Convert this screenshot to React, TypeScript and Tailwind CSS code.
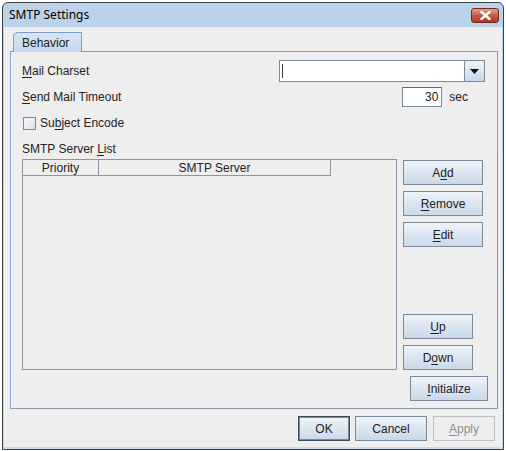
import React from 'react'

const font = { fontFamily: '"Liberation Sans", Arial, sans-serif' }

function U({ children }: { children: React.ReactNode }) {
  return <span className="underline underline-offset-[2px] decoration-[1px]">{children}</span>
}

function Btn({
  children,
  w,
  cls = '',
  disabled = false,
  def = false,
}: {
  children: React.ReactNode
  w: string
  cls?: string
  disabled?: boolean
  def?: boolean
}) {
  if (disabled) {
    return (
      <div
        className={`${w} h-[25px] flex items-center justify-center border border-[#b8c0c8] bg-[#eeeeee] text-[#8f8f8f] ${cls}`}
      >
        {children}
      </div>
    )
  }
  return (
    <div
      className={`${w} h-[25px] flex items-center justify-center border ${
        def ? 'border-[#3d4a58] shadow-[inset_0_0_0_1px_#7a8a99]' : 'border-[#7a8a99]'
      } bg-gradient-to-b from-[#eef3f9] via-[#dbe6f1] to-[#c9d9ea] text-[#222] ${cls}`}
    >
      {children}
    </div>
  )
}

export default function App() {
  return (
    <div className="w-[506px] h-[451px] bg-white overflow-hidden text-[12px]" style={font}>
      <div className="ml-[2px] mt-[2px] w-[502px] h-[448px] border border-[#3a4048] rounded-t-[6px] bg-gradient-to-b from-[#bcd2e9] to-[#c9dbee] flex flex-col">
        {/* title bar */}
        <div className="h-[24px] flex items-center pl-[6px] pr-[4px]">
          <span className="text-[12px] text-black" style={{ fontFamily: '"Noto Sans", "Liberation Sans", sans-serif' }}>
            SMTP Settings
          </span>
          <div className="ml-auto w-[28px] h-[15px] rounded-[3px] border border-[#6b2a20] bg-gradient-to-b from-[#e3a08e] via-[#c85a42] to-[#b03a22] flex items-center justify-center">
            <svg width="11" height="9" viewBox="0 0 11 9">
              <path d="M1.5 1 L9.5 8 M9.5 1 L1.5 8" stroke="#fff" strokeWidth="2.4" strokeLinecap="square" />
            </svg>
          </div>
        </div>

        {/* client area */}
        <div className="flex-1 mx-[1px] mb-[2px] bg-[#eeeeee] pl-[6px] pr-[4px] pt-[5px] flex flex-col">
          {/* tab strip */}
          <div className="h-[19px] flex items-end">
            <div className="ml-[3px] w-[69px] h-[20px] -mb-[1px] relative z-10 border border-[#7e9cc8] border-b-0 rounded-tl-[5px] bg-gradient-to-b from-[#d6e5f4] to-[#c4d8ee] flex items-center pl-[8px] text-[#222]">
              Behavior
            </div>
          </div>

          {/* tab panel */}
          <div className="h-[358px] border border-[#8d9aaa] border-l-[#88a8dc] pl-[11px] pr-[7px] flex flex-col">
            {/* row 1 */}
            <div className="mt-[8px] h-[22px] flex items-center">
              <span className="text-[#222]"><U>M</U>ail Charset</span>
              <div className="ml-auto mr-[5px] w-[206px] h-[22px] border border-[#7a8a99] bg-white flex">
                <div className="flex-1 flex items-center pl-[2px]">
                  <div className="w-[1px] h-[14px] bg-[#333]" />
                </div>
                <div className="w-[20px] border-l border-[#7a8a99] bg-gradient-to-b from-[#eef3f9] to-[#c9d9ea] flex items-center justify-center">
                  <svg width="9" height="5" viewBox="0 0 9 5">
                    <path d="M0 0 H9 L4.5 5 Z" fill="#111" />
                  </svg>
                </div>
              </div>
            </div>

            {/* row 2 */}
            <div className="mt-[5px] h-[20px] flex items-center">
              <span className="text-[#222]"><U>S</U>end Mail Timeout</span>
              <div className="ml-auto mr-[22px] flex items-center">
                <div className="w-[40px] h-[20px] border border-[#7a8a99] border-t-[#5f6b78] bg-white flex items-center justify-end pr-[3px] text-[#222]">
                  30
                </div>
                <span className="ml-[7px] text-[#222]">sec</span>
              </div>
            </div>

            {/* row 3 */}
            <div className="mt-[6px] h-[20px] flex items-center">
              <div className="ml-[1px] w-[13px] h-[13px] border border-[#7a8a99] bg-gradient-to-br from-[#f6f9fc] to-[#d6e2ee]" />
              <span className="ml-[4px] text-[#222]">Su<U>b</U>ject Encode</span>
            </div>

            {/* row 4 */}
            <div className="mt-[8px] h-[16px] flex items-center">
              <span className="text-[#222]">SMTP Server <U>L</U>ist</span>
            </div>

            {/* row 5 */}
            <div className="mt-[2px] flex">
              <div className="w-[375px] h-[211px] border border-[#8a96a4] bg-[#eeeeee]">
                <div className="flex h-[16px]">
                  <div className="w-[76px] border-r border-b border-[#8a96a4] flex items-center justify-center text-[#222]">
                    Priority
                  </div>
                  <div className="w-[232px] border-r border-b border-[#8a96a4] flex items-center justify-center text-[#222]">
                    SMTP Server
                  </div>
                </div>
              </div>
              <div className="ml-[6px] flex flex-col h-[211px]">
                <Btn w="w-[80px]" cls="mt-[1px]">A<U>d</U>d</Btn>
                <Btn w="w-[80px]" cls="mt-[6px]"><U>R</U>emove</Btn>
                <Btn w="w-[80px]" cls="mt-[6px]"><U>E</U>dit</Btn>
                <Btn w="w-[70px]" cls="mt-auto"><U>U</U>p</Btn>
                <Btn w="w-[70px]" cls="mt-[6px]">D<U>o</U>wn</Btn>
              </div>
            </div>

            {/* row 6 */}
            <div className="mt-[6px] flex justify-end pr-[2px]">
              <Btn w="w-[78px]"><U>I</U>nitialize</Btn>
            </div>
          </div>

          {/* dialog buttons */}
          <div className="mt-[7px] flex justify-end pr-[3px]">
            <Btn w="w-[52px]" def>OK</Btn>
            <Btn w="w-[72px]" cls="ml-[5px]">Cancel</Btn>
            <Btn w="w-[62px]" cls="ml-[6px]" disabled><U>A</U>pply</Btn>
          </div>
        </div>
      </div>
    </div>
  )
}
